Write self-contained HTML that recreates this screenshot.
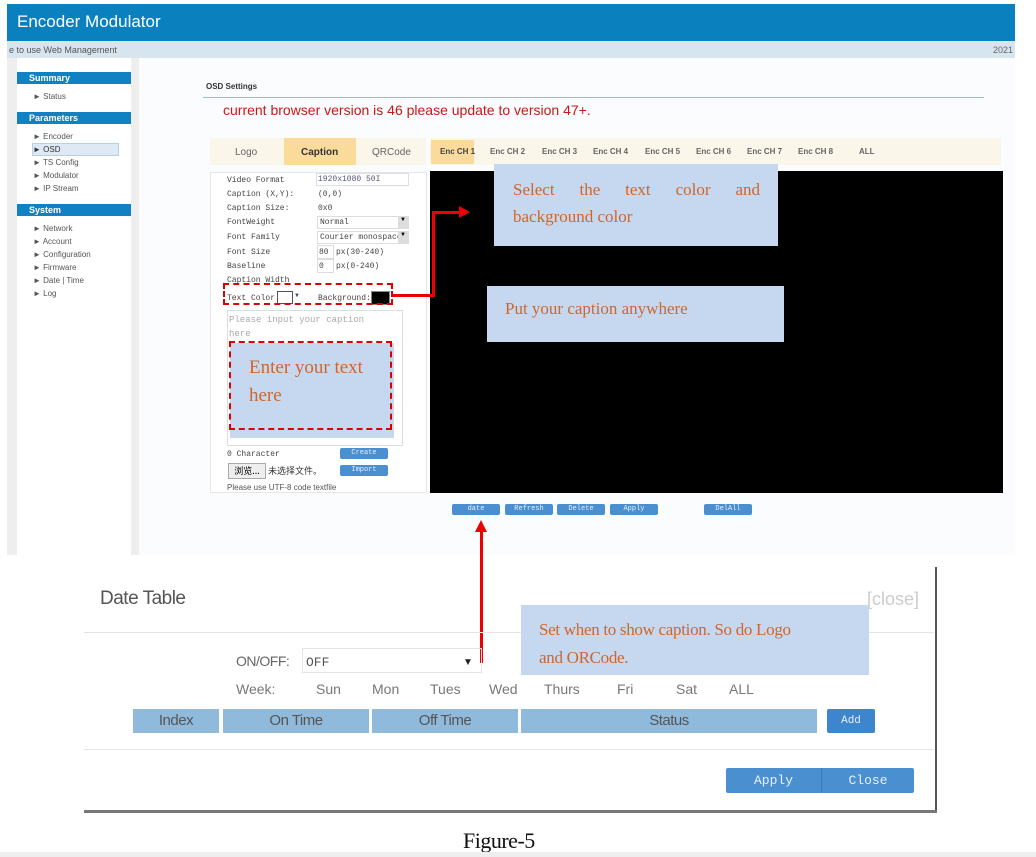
<!DOCTYPE html>
<html><head><meta charset="utf-8"><style>
*{margin:0;padding:0;box-sizing:border-box}
body{width:1036px;height:857px;background:#fff;position:relative;overflow:hidden;font-family:"Liberation Sans",Arial,sans-serif}
.a{position:absolute}
.mono{font-family:"Liberation Mono",monospace}
.serif{font-family:"Liberation Serif",serif}
.side{font-size:8px;color:#555}
.sh{background:#1082c4;color:#fff;font-weight:bold;font-size:9px;padding-left:12px;height:12px;line-height:12px}
.lbl{font-size:8px;color:#444;font-family:"Liberation Mono",monospace}
.btn{background:#4a8fd0;color:#e8f0fa;font-size:7px;text-align:center;font-family:"Liberation Mono",monospace;border-radius:2px;height:11px;line-height:11px}
.tab{font-size:8px;color:#666;font-weight:bold}
.note{background:#c5d8ef;color:#d0662a;font-family:"Liberation Serif",serif}
.th{background:#8fbadb;color:#555;font-size:15px;text-align:center;height:24px;line-height:24px;letter-spacing:-0.5px}
.wk{font-size:14px;color:#777}
</style></head><body>
<div class="a" style="left:7px;top:4px;width:1008px;height:37px;background:#0b80bf"></div>
<div class="a" style="left:17px;top:12px;font-size:17px;color:#fff">Encoder Modulator</div>
<div class="a" style="left:7px;top:41px;width:1008px;height:17px;background:#d7e5ef"></div>
<div class="a" style="left:9px;top:45px;font-size:9px;color:#555">e to use Web Management</div>
<div class="a" style="left:993px;top:45px;font-size:9px;color:#666">2021</div>
<div class="a" style="left:7px;top:58px;width:1008px;height:497px;background:#fbfcfd"></div>
<div class="a" style="left:7px;top:58px;width:132px;height:497px;background:#eee"></div>
<div class="a" style="left:17px;top:58px;width:114px;height:497px;background:#fff"></div>
<div class="a sh" style="left:17px;top:72px;width:114px">Summary</div>
<div class="a side" style="left:33px;top:92px">► Status</div>
<div class="a sh" style="left:17px;top:112px;width:114px">Parameters</div>
<div class="a side" style="left:33px;top:132px">► Encoder</div>
<div class="a" style="left:32px;top:143px;width:87px;height:13px;background:#dde9f5;border:1px solid #b8d0e6"></div>
<div class="a side" style="left:33px;top:145px;color:#333">► OSD</div>
<div class="a side" style="left:33px;top:158px">► TS Config</div>
<div class="a side" style="left:33px;top:171px">► Modulator</div>
<div class="a side" style="left:33px;top:184px">► IP Stream</div>
<div class="a sh" style="left:17px;top:204px;width:114px">System</div>
<div class="a side" style="left:33px;top:224px">► Network</div>
<div class="a side" style="left:33px;top:237px">► Account</div>
<div class="a side" style="left:33px;top:250px">► Configuration</div>
<div class="a side" style="left:33px;top:263px">► Firmware</div>
<div class="a side" style="left:33px;top:276px">► Date | Time</div>
<div class="a side" style="left:33px;top:289px">► Log</div>
<div class="a" style="left:206px;top:82px;font-size:8px;font-weight:bold;color:#333">OSD Settings</div>
<div class="a" style="left:203px;top:97px;width:781px;height:1px;background:#9bbdd0"></div>
<div class="a" style="left:223px;top:102px;font-size:14px;color:#c81818">current browser version is 46 please update to version 47+.</div>
<div class="a" style="left:210px;top:138px;width:216px;height:27px;background:#fbf6ea"></div>
<div class="a" style="left:284px;top:138px;width:72px;height:27px;background:#fbdb9c"></div>
<div class="a" style="left:235px;top:147px;font-size:10px;color:#666">Logo</div>
<div class="a" style="left:301px;top:147px;font-size:10px;color:#333;font-weight:bold">Caption</div>
<div class="a" style="left:372px;top:147px;font-size:10px;color:#666">QRCode</div>
<div class="a" style="left:430px;top:138px;width:571px;height:27px;background:#fbf6ea"></div>
<div class="a" style="left:431px;top:140px;width:43px;height:24px;background:#fbdb9c"></div>
<div class="a tab" style="left:440px;top:147px;color:#444">Enc CH 1</div>
<div class="a tab" style="left:490px;top:147px">Enc CH 2</div>
<div class="a tab" style="left:542px;top:147px">Enc CH 3</div>
<div class="a tab" style="left:593px;top:147px">Enc CH 4</div>
<div class="a tab" style="left:645px;top:147px">Enc CH 5</div>
<div class="a tab" style="left:696px;top:147px">Enc CH 6</div>
<div class="a tab" style="left:747px;top:147px">Enc CH 7</div>
<div class="a tab" style="left:798px;top:147px">Enc CH 8</div>
<div class="a tab" style="left:859px;top:147px">ALL</div>
<div class="a" style="left:210px;top:172px;width:217px;height:321px;border:1px solid #e6e6e6;background:#fff"></div>
<div class="a lbl" style="left:227px;top:176px">Video Format</div>
<div class="a" style="left:316px;top:173px;width:93px;height:13px;border:1px solid #dde;"></div>
<div class="a lbl" style="left:318px;top:175px;color:#557">1920x1080 50I</div>
<div class="a lbl" style="left:227px;top:190px">Caption (X,Y):</div><div class="a lbl" style="left:318px;top:190px">(0,0)</div>
<div class="a lbl" style="left:227px;top:204px">Caption Size:</div><div class="a lbl" style="left:318px;top:204px">0x0</div>
<div class="a lbl" style="left:227px;top:218px">FontWeight</div>
<div class="a" style="left:317px;top:216px;width:92px;height:13px;border:1px solid #ddd"></div><div class="a lbl" style="left:320px;top:218px">Normal</div><div class="a" style="left:398px;top:217px;width:10px;height:11px;background:#ddd;font-size:6px;text-align:center">▼</div>
<div class="a lbl" style="left:227px;top:233px">Font Family</div>
<div class="a" style="left:317px;top:231px;width:92px;height:13px;border:1px solid #ddd"></div><div class="a lbl" style="left:320px;top:233px;width:78px;overflow:hidden;white-space:nowrap">Courier monospace</div><div class="a" style="left:398px;top:232px;width:10px;height:11px;background:#ddd;font-size:6px;text-align:center">▼</div>
<div class="a lbl" style="left:227px;top:248px">Font Size</div>
<div class="a" style="left:317px;top:245px;width:17px;height:14px;border:1px solid #ddd"></div><div class="a lbl" style="left:319px;top:248px">80</div><div class="a lbl" style="left:336px;top:248px">px(30-240)</div>
<div class="a lbl" style="left:227px;top:262px">Baseline</div>
<div class="a" style="left:317px;top:259px;width:17px;height:14px;border:1px solid #ddd"></div><div class="a lbl" style="left:319px;top:262px">0</div><div class="a lbl" style="left:336px;top:262px">px(0-240)</div>
<div class="a lbl" style="left:227px;top:276px;height:7px;overflow:hidden">Caption Width</div>
<div class="a lbl" style="left:227px;top:294px">Text Color</div>
<div class="a" style="left:277px;top:291px;width:16px;height:13px;border:1px solid #555;background:#fff"></div>
<div class="a" style="left:294px;top:293px;font-size:6px;color:#444">▼</div>
<div class="a lbl" style="left:318px;top:294px">Background:</div>
<div class="a" style="left:371px;top:291px;width:19px;height:14px;background:#000;border:1px solid #888"></div>
<div class="a" style="left:223px;top:283px;width:170px;height:22px;border:2px dashed #d00"></div>
<div class="a" style="left:227px;top:310px;width:176px;height:136px;border:1px solid #ddd"></div>
<div class="a lbl" style="left:229px;top:313px;color:#aaa;line-height:14px;width:160px;font-size:9px">Please input your caption here</div>
<div class="a" style="left:230px;top:343px;width:164px;height:95px;background:#c5d8ef"></div>
<div class="a" style="left:229px;top:341px;width:163px;height:89px;border:2px dashed #d00"></div>
<div class="a serif" style="left:249px;top:354px;font-size:19px;color:#d0662a;line-height:28px">Enter your text<br>here</div>
<div class="a lbl" style="left:227px;top:450px">0 Character</div>
<div class="a btn" style="left:340px;top:448px;width:48px">Create</div>
<div class="a" style="left:228px;top:463px;width:38px;height:16px;border:1px solid #aaa;background:#eee;font-size:9px;text-align:center;line-height:14px;font-family:'Noto Sans CJK SC',sans-serif">浏览...</div>
<div class="a" style="left:268px;top:464px;font-size:9px;color:#333;font-family:'Noto Sans CJK SC',sans-serif">未选择文件。</div>
<div class="a btn" style="left:340px;top:465px;width:48px">Import</div>
<div class="a" style="left:227px;top:483px;font-size:8px;color:#555">Please use UTF-8 code textfile</div>
<div class="a" style="left:430px;top:171px;width:573px;height:322px;background:#000"></div>
<div class="a note" style="left:494px;top:164px;width:284px;height:82px;font-size:17px;line-height:27px;padding:12px 18px 0 19px;text-align:justify;text-align-last:left">Select&nbsp;&nbsp; the&nbsp;&nbsp; text&nbsp;&nbsp; color&nbsp;&nbsp; and background color</div>
<div class="a note" style="left:487px;top:286px;width:297px;height:56px;font-size:17px;padding:13px 0 0 18px">Put your caption anywhere</div>
<div class="a" style="left:393px;top:294px;width:42px;height:3px;background:#e00"></div>
<div class="a" style="left:432px;top:211px;width:3px;height:86px;background:#e00"></div>
<div class="a" style="left:432px;top:211px;width:30px;height:3px;background:#e00"></div>
<div class="a" style="left:459px;top:206px;width:0;height:0;border-top:6px solid transparent;border-bottom:6px solid transparent;border-left:11px solid #e00"></div>
<div class="a btn" style="left:452px;top:504px;width:48px">date</div>
<div class="a btn" style="left:505px;top:504px;width:48px">Refresh</div>
<div class="a btn" style="left:557px;top:504px;width:48px">Delete</div>
<div class="a btn" style="left:610px;top:504px;width:48px">Apply</div>
<div class="a btn" style="left:704px;top:504px;width:48px">DelAll</div>
<div class="a" style="left:480px;top:530px;width:3px;height:133px;background:#e00"></div>
<div class="a" style="left:475px;top:520px;width:0;height:0;border-left:6px solid transparent;border-right:6px solid transparent;border-bottom:12px solid #e00"></div>
<div class="a" style="left:935px;top:567px;width:2px;height:246px;background:#555"></div>
<div class="a" style="left:84px;top:810px;width:853px;height:3px;background:#777"></div>
<div class="a" style="left:100px;top:588px;font-size:19px;color:#555;letter-spacing:-0.5px">Date Table</div>
<div class="a" style="left:867px;top:589px;font-size:18px;color:#ccc">[close]</div>
<div class="a" style="left:84px;top:632px;width:850px;height:1px;background:#e4e4e4"></div>
<div class="a" style="left:84px;top:749px;width:850px;height:1px;background:#e4e4e4"></div>
<div class="a" style="left:236px;top:653px;font-size:14px;color:#666;letter-spacing:-0.5px">ON/OFF:</div>
<div class="a" style="left:302px;top:648px;width:180px;height:25px;border:1px solid #e4e4e4"></div>
<div class="a mono" style="left:306px;top:655px;font-size:13px;color:#555">OFF</div>
<div class="a" style="left:463px;top:657px;font-size:10px;color:#222">▼</div>
<div class="a note" style="left:521px;top:605px;width:348px;height:70px;font-size:17px;line-height:28px;padding:11px 0 0 18px;letter-spacing:-0.3px;white-space:nowrap">Set when to show caption. So do Logo<br>and ORCode.</div>
<div class="a wk" style="left:236px;top:681px">Week:</div>
<div class="a wk" style="left:316px;top:681px">Sun</div>
<div class="a wk" style="left:372px;top:681px">Mon</div>
<div class="a wk" style="left:430px;top:681px">Tues</div>
<div class="a wk" style="left:489px;top:681px">Wed</div>
<div class="a wk" style="left:544px;top:681px">Thurs</div>
<div class="a wk" style="left:617px;top:681px">Fri</div>
<div class="a wk" style="left:676px;top:681px">Sat</div>
<div class="a wk" style="left:729px;top:681px">ALL</div>
<div class="a th" style="left:133px;top:709px;width:86px">Index</div>
<div class="a th" style="left:223px;top:709px;width:146px">On Time</div>
<div class="a th" style="left:372px;top:709px;width:146px">Off Time</div>
<div class="a th" style="left:521px;top:709px;width:296px">Status</div>
<div class="a btn" style="left:827px;top:709px;width:48px;height:24px;line-height:24px;font-size:11px;background:#3d85cc">Add</div>
<div class="a btn" style="left:726px;top:768px;width:95px;height:25px;line-height:25px;font-size:13px;border-radius:2px 0 0 2px">Apply</div>
<div class="a btn" style="left:821px;top:768px;width:93px;height:25px;line-height:25px;font-size:13px;border-radius:0 2px 2px 0;border-left:1px solid #3a7ab8">Close</div>
<div class="a serif" style="left:463px;top:828px;font-size:22px;color:#111;letter-spacing:-0.5px">Figure-5</div>
<div class="a" style="left:0;top:852px;width:1036px;height:5px;background:#eee"></div>
</body></html>
